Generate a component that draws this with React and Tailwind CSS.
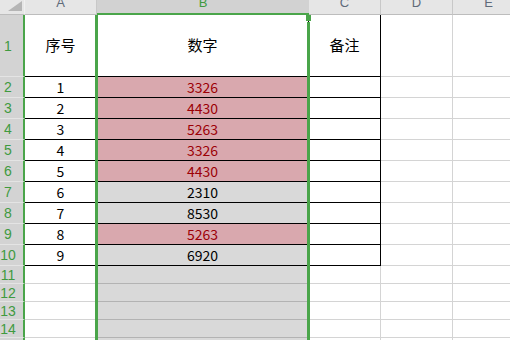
const GREEN = "#4aa54a";

// 序号 / 数字 rows; dup marks values that occur more than once in column B
const rows = [
  { a: "1", b: "3326", dup: true },
  { a: "2", b: "4430", dup: true },
  { a: "3", b: "5263", dup: true },
  { a: "4", b: "3326", dup: true },
  { a: "5", b: "4430", dup: true },
  { a: "6", b: "2310", dup: false },
  { a: "7", b: "8530", dup: false },
  { a: "8", b: "5263", dup: true },
  { a: "9", b: "6920", dup: false },
];

const EMPTY_ROWS = [11, 12, 13, 14, 15];
const COLS = ["A", "B", "C", "D", "E"];

function ColHeader({ label, active }) {
  return (
    <div
      className={
        active
          ? "flex items-end justify-center border-b-2 border-b-[#4aa54a] bg-[#d2d2d2] pb-[4px] text-[13px] leading-none text-[#3f9a3f]"
          : "flex items-end justify-center border-r border-b border-r-[#c8c8c8] border-b-[#bdbdbd] bg-[#e6e6e6] pb-[5px] text-[13px] leading-none text-[#5f6b7a]"
      }
    >
      {label}
    </div>
  );
}

function RowHeader({ n }) {
  return (
    <div className="flex items-center justify-center border-r-2 border-b border-r-[#4aa54a] border-b-[#e4e4e4] bg-[#d3d3d3] pr-[7px] text-[14px] leading-none text-[#3f9a3f]">
      {n}
    </div>
  );
}

function Cell({ children, className }) {
  return (
    <div className={`flex items-center justify-center border-r border-b ${className}`}>
      {children}
    </div>
  );
}

export default function App() {
  return (
    <div className="relative h-[340px] w-[510px] overflow-hidden bg-white [font-family:'Liberation_Sans',sans-serif]">
      <div className="grid grid-cols-[25px_72px_212px_72px_72px_72px] grid-rows-[15px_62px_repeat(9,21px)_repeat(5,18px)]">
        {/* select-all corner */}
        <div className="relative border-r border-b border-r-[#f0f0f0] border-b-[#bdbdbd] bg-[#e6e6e6]">
          <svg className="absolute right-[2px] bottom-[3px]" width="14" height="10" viewBox="0 0 14 10">
            <polygon points="14,0 14,10 0,10" fill="#b5b5b5" />
          </svg>
        </div>
        {COLS.map((c) => (
          <ColHeader key={c} label={c} active={c === "B"} />
        ))}

        {/* table heading row */}
        <RowHeader n={1} />
        <Cell className="border-black text-[15px] [font-family:'Noto_Sans_CJK_SC',sans-serif]">序号</Cell>
        <Cell className="border-black bg-white text-[15px] [font-family:'Noto_Sans_CJK_SC',sans-serif]">数字</Cell>
        <Cell className="border-black text-[15px] [font-family:'Noto_Sans_CJK_SC',sans-serif]">备注</Cell>
        <Cell className="border-[#d4d4d4]" />
        <Cell className="border-[#d4d4d4]" />

        {rows.map((r, i) => (
          <Row key={i} n={i + 2} row={r} />
        ))}

        {EMPTY_ROWS.map((n) => (
          <EmptyRow key={n} n={n} />
        ))}
      </div>

      {/* column B selection frame and fill handle */}
      <div className="absolute top-[15px] bottom-0 left-[95px] w-[3px] bg-[#4aa54a]" />
      <div className="absolute top-[22px] bottom-0 left-[307px] w-[3px] bg-[#4aa54a]" />
      <div className="absolute top-[15px] left-[306px] h-[6px] w-[5px] bg-[#4aa54a]" />
    </div>
  );
}

function Row({ n, row }) {
  return (
    <>
      <RowHeader n={n} />
      <Cell className="border-black text-[14px] text-black [font-family:'Noto_Sans_CJK_SC',sans-serif]">{row.a}</Cell>
      <Cell
        className={
          row.dup
            ? "border-black bg-[#d9a8ae] text-[14px] text-[#9c0006] [font-family:'Noto_Sans_CJK_SC',sans-serif]"
            : "border-black bg-[#d9d9d9] text-[14px] text-black [font-family:'Noto_Sans_CJK_SC',sans-serif]"
        }
      >
        {row.b}
      </Cell>
      <Cell className="border-black" />
      <Cell className="border-[#d4d4d4]" />
      <Cell className="border-[#d4d4d4]" />
    </>
  );
}

function EmptyRow({ n }) {
  return (
    <>
      <RowHeader n={n} />
      <Cell className="border-[#d4d4d4]" />
      <Cell className="border-[#b3b3b3] bg-[#d9d9d9]" />
      <Cell className="border-[#d4d4d4]" />
      <Cell className="border-[#d4d4d4]" />
      <Cell className="border-[#d4d4d4]" />
    </>
  );
}
